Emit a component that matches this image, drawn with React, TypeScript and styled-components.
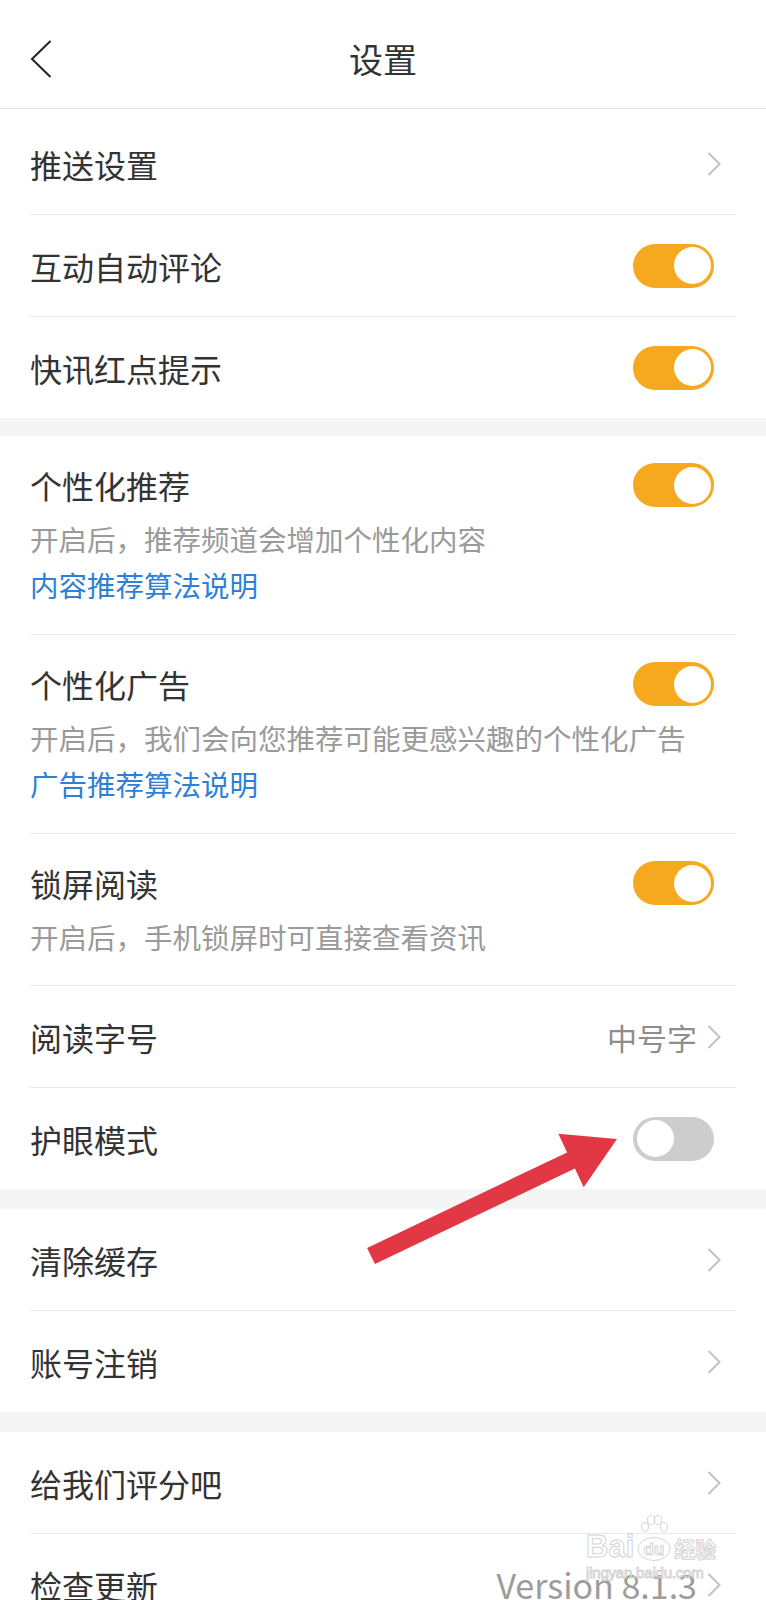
import React, { FC } from 'react';
import styled, { createGlobalStyle } from 'styled-components';

const GlobalStyle = createGlobalStyle`
  html, body {
    margin: 0;
    padding: 0;
    background: #fff;
    overflow: hidden;
  }
`;

const Page = styled.div`
  position: relative;
  width: 766px;
  height: 1600px;
  overflow: hidden;
  background: #f5f5f5;
  font-family: "Noto Sans CJK SC", "Noto Sans", sans-serif;
  color: #333;
`;

const Header = styled.header`
  box-sizing: border-box;
  height: 109px;
  padding-top: 10px;
  display: grid;
  grid-template-columns: 1fr auto 1fr;
  align-items: center;
  background: #fff;
  border-bottom: 1px solid #e2e2e2;
`;

const BackButton = styled.div`
  display: flex;
  align-items: center;
  padding-left: 30px;
`;

const Title = styled.h1`
  margin: 0;
  font-size: 34px;
  font-weight: 400;
  line-height: 44px;
  color: #333;
`;

const Group = styled.section<{ $top?: number; $gap?: number }>`
  background: #fff;
  padding-top: ${(p) => p.$top ?? 0}px;
  margin-top: ${(p) => p.$gap ?? 0}px;
`;

const Row = styled.div<{ $rich?: boolean; $linked?: boolean }>`
  margin: 0 30px;
  display: flex;
  justify-content: space-between;
  align-items: ${(p) => (p.$rich ? 'flex-start' : 'center')};
  height: ${(p) => (p.$rich ? 'auto' : '101px')};
  padding: ${(p) => (p.$rich ? `27px 0 ${p.$linked ? 29 : 28}px` : '0')};

  & + & {
    border-top: 1px solid #e8e8e8;
  }
`;

const TextCol = styled.div`
  flex: 1;
  min-width: 0;
  display: flex;
  flex-direction: column;
  white-space: nowrap;
`;

const Label = styled.div`
  font-size: 32px;
  line-height: 44px;
  color: #333;
`;

const Desc = styled.div`
  margin-top: 12px;
  width: 0;
  font-size: 28.5px;
  line-height: 40px;
  color: #9a9a9a;
  overflow: visible;
`;

const Link = styled.a`
  margin-top: 6px;
  font-size: 28.5px;
  line-height: 40px;
  color: #2f7fd6;
  text-decoration: none;
`;

const Trail = styled.div`
  display: flex;
  align-items: center;
  gap: 10px;
  margin-right: 15px;
`;

const Value = styled.span<{ $latin?: boolean }>`
  font-size: ${(p) => (p.$latin ? 34 : 30)}px;
  line-height: 44px;
  color: ${(p) => (p.$latin ? '#9c9c9c' : '#8e8e8e')};
`;

const Switch = styled.div<{ $on: boolean }>`
  position: relative;
  flex: none;
  width: 81px;
  height: 44px;
  margin-right: 22px;
  border-radius: 22px;
  background: ${(p) => (p.$on ? '#f6a81f' : '#cdcdcd')};

  &::after {
    content: '';
    position: absolute;
    top: 3.5px;
    ${(p) => (p.$on ? 'right: 3.5px;' : 'left: 3.5px;')}
    width: 37px;
    height: 37px;
    border-radius: 50%;
    background: #fff;
  }
`;

const Overlay = styled.svg`
  position: absolute;
  left: 0;
  top: 0;
  pointer-events: none;
`;

const Watermark = styled.div`
  position: absolute;
  left: 586px;
  top: 1514px;
  display: flex;
  flex-direction: column;
  align-items: flex-start;
  pointer-events: none;
  color: rgba(255, 255, 255, 0.7);
  -webkit-text-stroke: 1px rgba(200, 200, 200, 0.8);
  font-family: "Liberation Sans", sans-serif;
`;

const MarkLine = styled.div`
  display: flex;
  align-items: flex-end;
`;

const MarkBig = styled.span`
  font-size: 31px;
  font-weight: 700;
  line-height: 30px;
`;

const MarkPaw = styled.div`
  display: flex;
  flex-direction: column;
  align-items: center;
  margin: 0 2px;
`;

const MarkCjk = styled.span`
  font-family: "Noto Sans CJK SC", sans-serif;
  font-size: 21px;
  line-height: 28px;
  font-weight: 700;
`;

const MarkUrl = styled.span`
  margin-top: 3px;
  font-size: 15px;
  line-height: 16px;
  letter-spacing: -0.2px;
`;

const Chevron: FC = () => (
  <svg width="14" height="24" viewBox="0 0 14 24">
    <polyline points="1.5,1 12.5,12 1.5,23" fill="none" stroke="#c2c2c2" strokeWidth="2" />
  </svg>
);

interface IItem {
  label: string;
  desc?: string;
  link?: string;
  toggle?: boolean;
  value?: string;
}

const Item: FC<{ item: IItem }> = ({ item }) => {
  const rich = !!item.desc;
  return (
    <Row $rich={rich} $linked={!!item.link}>
      <TextCol>
        <Label>{item.label}</Label>
        {item.desc && <Desc>{item.desc}</Desc>}
        {item.link && <Link>{item.link}</Link>}
      </TextCol>
      {item.toggle !== undefined ? (
        <Switch $on={item.toggle} />
      ) : (
        <Trail>
          {item.value && <Value $latin={/^[A-Za-z]/.test(item.value)}>{item.value}</Value>}
          <Chevron />
        </Trail>
      )}
    </Row>
  );
};

const groups: IItem[][] = [
  [
    { label: '推送设置' },
    { label: '互动自动评论', toggle: true },
    { label: '快讯红点提示', toggle: true },
  ],
  [
    {
      label: '个性化推荐',
      desc: '开启后，推荐频道会增加个性化内容',
      link: '内容推荐算法说明',
      toggle: true,
    },
    {
      label: '个性化广告',
      desc: '开启后，我们会向您推荐可能更感兴趣的个性化广告',
      link: '广告推荐算法说明',
      toggle: true,
    },
    { label: '锁屏阅读', desc: '开启后，手机锁屏时可直接查看资讯', toggle: true },
    { label: '阅读字号', value: '中号字' },
    { label: '护眼模式', toggle: false },
  ],
  [{ label: '清除缓存' }, { label: '账号注销' }],
  [{ label: '给我们评分吧' }, { label: '检查更新', value: 'Version 8.1.3' }],
];

const App: FC = () => (
  <Page>
    <GlobalStyle />
    <Header>
      <BackButton>
        <svg width="22" height="38" viewBox="0 0 22 38">
          <polyline points="20.5,1 2,19 20.5,37" fill="none" stroke="#222" strokeWidth="2" />
        </svg>
      </BackButton>
      <Title>设置</Title>
      <div />
    </Header>
    {groups.map((g, i) => (
      <Group key={i} $top={i === 0 ? 4 : 0} $gap={i === 0 ? 0 : i === 1 ? 18 : 20}>
        {g.map((item) => (
          <Item key={item.label} item={item} />
        ))}
      </Group>
    ))}

    <Overlay width="766" height="1600" viewBox="0 0 766 1600">
      <polygon
        points="367.1,1247.9 567.1,1152.4 558.3,1133.8 617,1139 583.7,1187.2 574.9,1168.6 374.9,1264.1"
        fill="#e23744"
      />
    </Overlay>

    <Watermark>
      <MarkLine>
        <MarkBig>Bai</MarkBig>
        <MarkPaw>
          <svg width="36" height="22" viewBox="0 0 36 22" fill="rgba(255,255,255,0.7)" stroke="rgba(200,200,200,0.8)">
            <ellipse cx="9" cy="13" rx="3.5" ry="4.5" />
            <ellipse cx="15" cy="6" rx="3.5" ry="4.5" />
            <ellipse cx="22" cy="6" rx="3.5" ry="4.5" />
            <ellipse cx="28" cy="13" rx="3.5" ry="4.5" />
          </svg>
          <svg width="36" height="26" viewBox="0 0 36 26">
            <ellipse cx="18" cy="13" rx="16" ry="11.5" fill="rgba(255,255,255,0.7)" stroke="rgba(200,200,200,0.8)" />
            <text x="18" y="19" textAnchor="middle" fontSize="17" fontWeight="700" fontFamily="Liberation Sans, sans-serif" fill="rgba(255,255,255,0.7)" stroke="rgba(200,200,200,0.8)">du</text>
          </svg>
        </MarkPaw>
        <MarkCjk>经验</MarkCjk>
      </MarkLine>
      <MarkUrl>jingyan.baidu.com</MarkUrl>
    </Watermark>
  </Page>
);

export default App;
